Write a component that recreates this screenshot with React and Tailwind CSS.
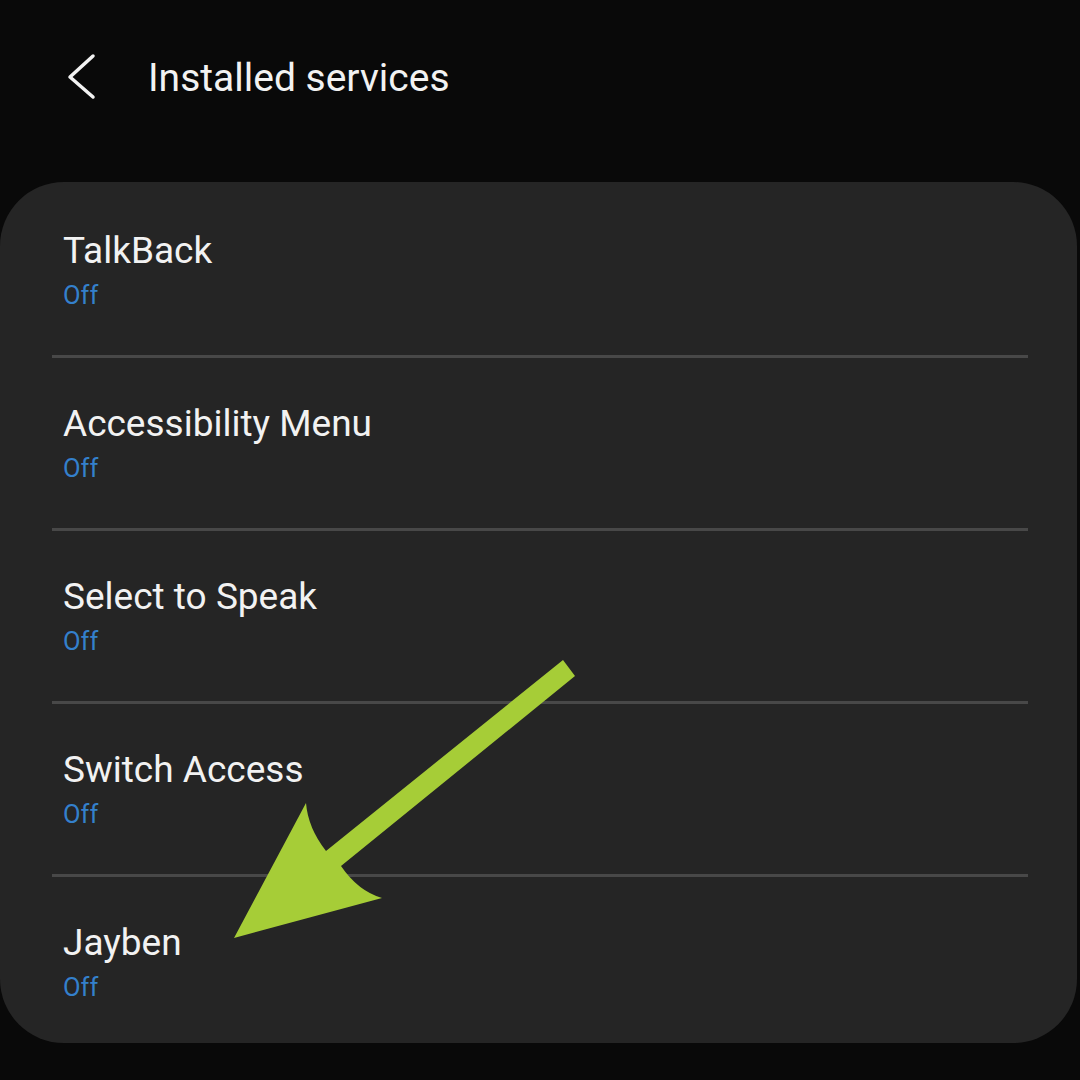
const SERVICES = ['TalkBack', 'Accessibility Menu', 'Select to Speak', 'Switch Access', 'Jayben'];

export default function App() {
  return (
    <div className="relative w-[1080px] h-[1080px] overflow-hidden bg-[#090909] font-['Roboto',sans-serif]">
      {/* header */}
      <div className="flex items-center pl-[64px] pt-[50px]">
        <svg width="36" height="54" viewBox="0 0 36 54" fill="none" stroke="#f2f2f2" strokeWidth="3.5" strokeLinecap="round" strokeLinejoin="round">
          <path d="M29 6 L6 27 L29 47" />
        </svg>
        <h1 className="ml-[48px] mt-[2px] text-[39px] leading-[48px] text-[#f2f2f2] font-normal">Installed services</h1>
      </div>

      {/* list card */}
      <div className="mt-[78px] w-[1077px] h-[861px] rounded-[64px] bg-[#252525] pt-[3px]">
        {SERVICES.map((name, i) => (
          <div key={name}>
            <div className={i === SERVICES.length - 1 ? 'pt-[45px] px-[63px]' : 'h-[170px] pt-[45px] px-[63px]'}>
              <p className="text-[37px] leading-[42px] text-[#f2f2f2]">{name}</p>
              <p className="mt-[8px] text-[25.5px] leading-[30px] text-[#3480cc]">Off</p>
            </div>
            {i < SERVICES.length - 1 && <div className="ml-[52px] w-[976px] h-[3px] bg-[#484848]" />}
          </div>
        ))}
      </div>

      {/* green arrow overlay */}
      <svg className="absolute left-0 top-0 pointer-events-none" width="1080" height="1080" viewBox="0 0 1080 1080">
        <path
          d="M563 660 L326 851 Q308 828 306 803 L234 938 L382 898 Q358 891 341 866 L575 676 Z"
          fill="#a6cd37"
        />
      </svg>
    </div>
  );
}
